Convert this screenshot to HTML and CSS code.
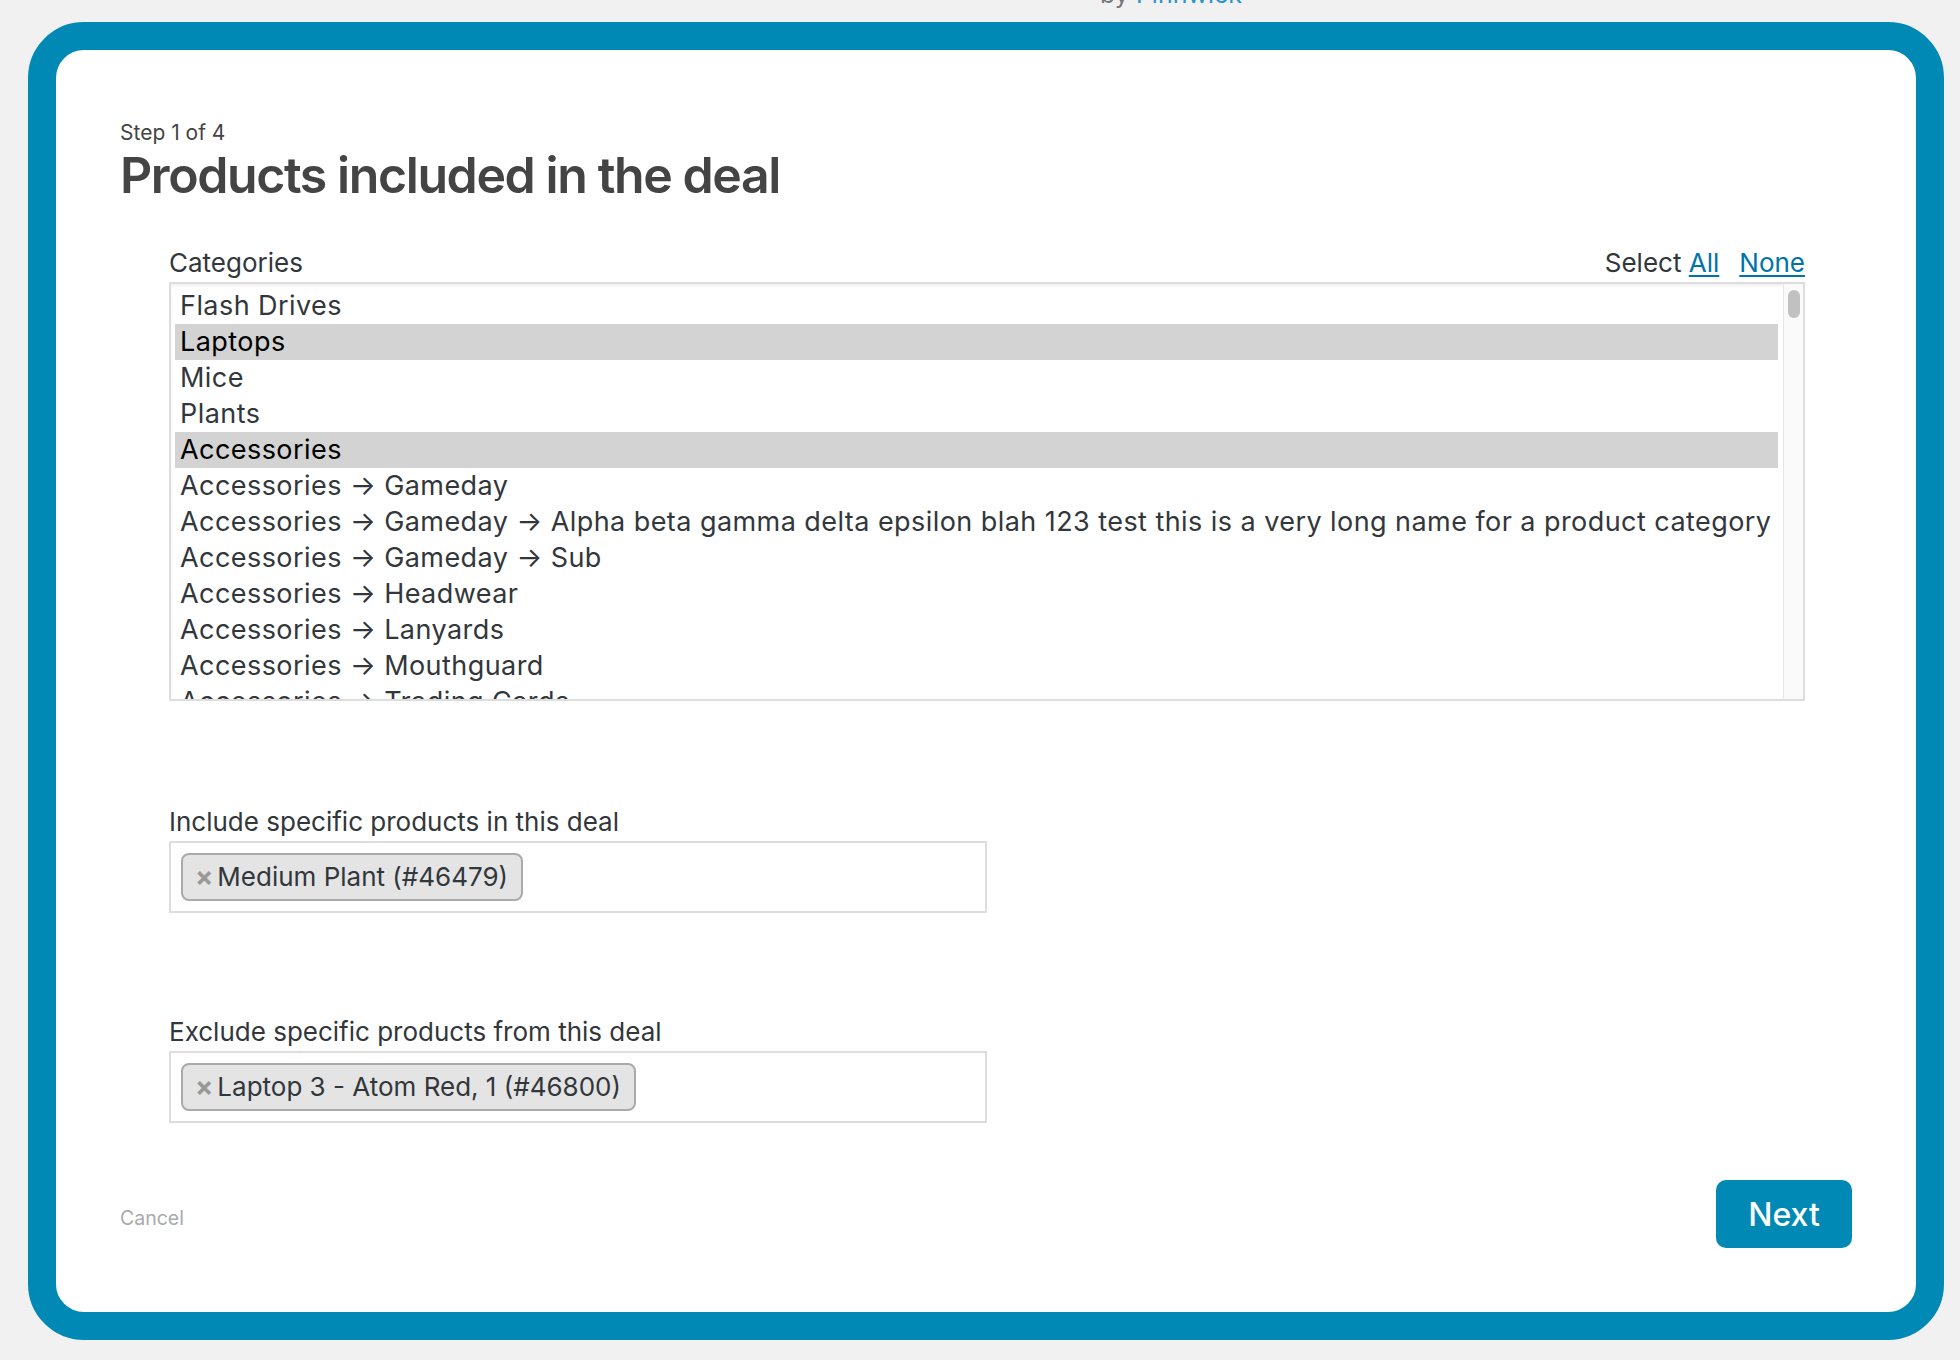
FILE: index.html
```html
<!DOCTYPE html>
<html lang="en">
<head>
<meta charset="utf-8">
<title>Products included in the deal</title>
<link rel="stylesheet" href="styles.css">
</head>
<body>
<div class="brand"><span class="brand-by">by</span> <a class="brand-link" href="#">Pinnwick</a></div>
<div class="modal">
  <div class="step">Step 1 of 4</div>
  <h1 class="title">Products included in the deal</h1>
  <div class="fields">
    <div class="field field-first">
      <div class="label-row">
        <span class="label">Categories</span>
        <span class="select-links">Select <a href="#" class="link">All</a><a href="#" class="link link-none">None</a></span>
      </div>
      <div class="listbox">
        <div class="options">
          <div class="option">Flash Drives</div>
          <div class="option selected">Laptops</div>
          <div class="option">Mice</div>
          <div class="option">Plants</div>
          <div class="option selected">Accessories</div>
          <div class="option">Accessories → Gameday</div>
          <div class="option">Accessories → Gameday → Alpha beta gamma delta epsilon blah 123 test this is a very long name for a product category</div>
          <div class="option">Accessories → Gameday → Sub</div>
          <div class="option">Accessories → Headwear</div>
          <div class="option">Accessories → Lanyards</div>
          <div class="option">Accessories → Mouthguard</div>
          <div class="option">Accessories → Trading Cards</div>
          <div class="option">Accessories → Water Bottles</div>
        </div>
        <div class="scrolltrack"><div class="thumb"></div></div>
      </div>
    </div>
    <div class="field">
      <div class="label">Include specific products in this deal</div>
      <div class="tagbox">
        <span class="chip"><span class="chip-x">×</span>Medium Plant (#46479)</span>
      </div>
    </div>
    <div class="field field-exclude">
      <div class="label">Exclude specific products from this deal</div>
      <div class="tagbox">
        <span class="chip"><span class="chip-x">×</span>Laptop 3 - Atom Red, 1 (#46800)</span>
      </div>
    </div>
  </div>
  <div class="footer">
    <a href="#" class="cancel">Cancel</a>
    <button class="next" type="button">Next</button>
  </div>
</div>
</body>
</html>
```

FILE: styles.css
```css
* { box-sizing: border-box; }
html, body { margin: 0; padding: 0; }
body {
  background: #f1f1f1;
  font-family: Inter, "Noto Sans", "Liberation Sans", sans-serif;
  color: #32373c;
}
.brand {
  margin-top: -22px;
  height: 44px;
  line-height: 32px;
  font-size: 25px;
  padding-left: 1100px;
  white-space: nowrap;
}
.brand-by { color: #777; }
.brand-link { color: #2b94c9; text-decoration: none; }

.modal {
  margin: 0 16px 20px 28px;
  border: 28px solid #0089b5;
  border-radius: 56px;
  background: #fff;
  padding: 71px 64px 64px 64px;
}
.step {
  font-size: 21px;
  line-height: 24px;
  color: #444;
  margin-bottom: 2px;
}
.title {
  margin: 0;
  font-size: 50px;
  line-height: 56px;
  font-weight: 600;
  color: #444;
  letter-spacing: -1.4px;
}
.fields {
  padding: 0 47px 0 49px;
}
.field { margin-top: 105px; }
.field-first { margin-top: 44px; }
.field-exclude { margin-top: 103px; }
.label-row {
  display: flex;
  justify-content: space-between;
  align-items: baseline;
}
.label {
  font-size: 26px;
  line-height: 32px;
  color: #32373c;
  margin-bottom: 3px;
}
.select-links {
  font-size: 26px;
  line-height: 32px;
  color: #32373c;
}
.link { color: #0073aa; text-decoration: underline; text-underline-offset: 3px; }
.link-none { margin-left: 20px; }

.listbox {
  display: flex;
  height: 419px;
  border: 2px solid #ddd;
  box-shadow: inset 0 2px 3px rgba(0,0,0,0.06);
  overflow: hidden;
}
.options {
  flex: 1;
  min-width: 0;
  padding: 4px 5px 0 4px;
  overflow: hidden;
}
.option {
  font-size: 27px;
  letter-spacing: 0.44px;
  line-height: 36px;
  height: 36px;
  padding-left: 5px;
  white-space: nowrap;
  color: #32373c;
}
.option.selected {
  background: #d3d3d3;
  color: #000;
}
.scrolltrack {
  width: 20px;
  flex: none;
  background: #fafafa;
  border-left: 1px solid #e6e6e6;
}
.thumb {
  width: 12px;
  height: 28px;
  margin: 6px 0 0 4px;
  border-radius: 6px;
  background: #c1c1c1;
}

.tagbox {
  width: 50%;
  height: 72px;
  border: 2px solid #ddd;
  padding: 10px;
  display: flex;
  align-items: flex-start;
}
.chip {
  display: inline-flex;
  align-items: center;
  height: 48px;
  border: 2px solid #aaa;
  border-radius: 8px;
  background: #e4e4e4;
  font-size: 26px;
  line-height: 44px;
  color: #32373c;
  padding: 0 13px 0 12px;
  white-space: nowrap;
}
.chip-x {
  color: #999;
  font-weight: 700;
  font-size: 27px;
  margin-right: 4px;
}

.footer {
  margin-top: 57px;
  display: flex;
  justify-content: space-between;
  align-items: center;
}
.cancel {
  font-size: 19.5px;
  color: #a7aaad;
  text-decoration: none;
  margin-top: 7px;
}
.next {
  width: 136px;
  height: 68px;
  border: 0;
  border-radius: 10px;
  background: #0089b5;
  color: #fff;
  font-family: Inter, "Noto Sans", "Liberation Sans", sans-serif;
  font-size: 32px;
  font-weight: 500;
  padding: 0;
}
```
